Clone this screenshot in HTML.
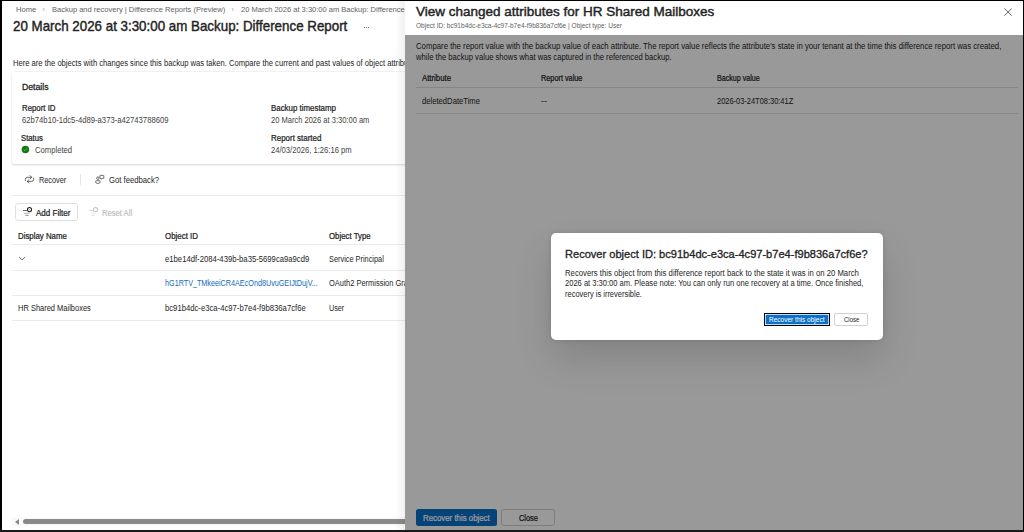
<!DOCTYPE html>
<html><head><meta charset="utf-8">
<style>
*{margin:0;padding:0;box-sizing:border-box}
html,body{width:1024px;height:532px;overflow:hidden;background:#fff}
body{font-family:"Liberation Sans",sans-serif;color:#242424;position:relative}
.t{position:absolute;white-space:nowrap;line-height:1}
</style></head><body>
<div class="t" style="left:15.90px;top:6.25px;font-size:7.5px;color:#616161;transform:scaleX(1.0097);transform-origin:0 0;">Home</div>
<div class="t" style="left:42.6px;top:5.8px;font-size:7px;color:#9e9e9e">&#x203A;</div>
<div class="t" style="left:51.80px;top:6.25px;font-size:7.5px;color:#616161;transform:scaleX(1.0028);transform-origin:0 0;">Backup and recovery | Difference Reports (Preview)</div>
<div class="t" style="left:231.5px;top:5.8px;font-size:7px;color:#9e9e9e">&#x203A;</div>
<div class="t" style="left:241.00px;top:6.25px;font-size:7.5px;color:#616161;transform:scaleX(1.0028);transform-origin:0 0;">20 March 2026 at 3:30:00 am Backup: Difference Report</div>
<div class="t" style="left:12.70px;top:19.48px;font-size:14.2px;color:#242424;-webkit-text-stroke:0.42px #242424;transform:scaleX(0.9406);transform-origin:0 0;">20 March 2026 at 3:30:00 am Backup: Difference Report</div>
<div style="position:absolute;left:363.5px;top:27.3px;width:1px;height:1px;background:#757575"></div>
<div style="position:absolute;left:365.9px;top:27.3px;width:1px;height:1px;background:#757575"></div>
<div style="position:absolute;left:368.3px;top:27.3px;width:1px;height:1px;background:#757575"></div>
<div class="t" style="left:12.70px;top:59.00px;font-size:8.5px;color:#242424;transform:scaleX(0.8948);transform-origin:0 0;">Here are the objects with changes since this backup was taken. Compare the current and past values of object attributes.</div>
<div style="position:absolute;left:12.3px;top:71.3px;width:420px;height:92.5px;background:#fff;border-radius:2px;box-shadow:0 1.6px 2.4px -0.6px rgba(0,0,0,.16)"></div>
<div style="position:absolute;left:14px;top:71px;width:400px;height:1px;background:#f1f1f1"></div>
<div class="t" style="left:21.50px;top:83.21px;font-size:9.2px;color:#242424;-webkit-text-stroke:0.30px #242424;transform:scaleX(0.9459);transform-origin:0 0;">Details</div>
<div class="t" style="left:21.50px;top:104.40px;font-size:8.5px;color:#242424;-webkit-text-stroke:0.24px #242424;transform:scaleX(0.9210);transform-origin:0 0;">Report ID</div>
<div class="t" style="left:21.50px;top:116.10px;font-size:8.5px;color:#424242;transform:scaleX(0.9036);transform-origin:0 0;">62b74b10-1dc5-4d89-a373-a42743788609</div>
<div class="t" style="left:271.40px;top:104.40px;font-size:8.5px;color:#242424;-webkit-text-stroke:0.24px #242424;transform:scaleX(0.9296);transform-origin:0 0;">Backup timestamp</div>
<div class="t" style="left:271.40px;top:116.10px;font-size:8.5px;color:#424242;transform:scaleX(0.8861);transform-origin:0 0;">20 March 2026 at 3:30:00 am</div>
<div class="t" style="left:21.10px;top:133.60px;font-size:8.5px;color:#242424;-webkit-text-stroke:0.24px #242424;transform:scaleX(0.9088);transform-origin:0 0;">Status</div>
<svg style="position:absolute;left:20px;top:144px" width="11" height="11" viewBox="0 0 11 11" shape-rendering="geometricPrecision"><circle cx="5.4" cy="5.4" r="3.75" fill="#107c10"/><path d="M3.7 5.6 L4.9 6.7 L7.1 4.3" stroke="#fff" stroke-opacity=".45" stroke-width="0.8" fill="none"/></svg>
<div class="t" style="left:34.80px;top:146.40px;font-size:8.5px;color:#424242;transform:scaleX(0.9025);transform-origin:0 0;">Completed</div>
<div class="t" style="left:271.40px;top:133.60px;font-size:8.5px;color:#242424;-webkit-text-stroke:0.24px #242424;transform:scaleX(0.9357);transform-origin:0 0;">Report started</div>
<div class="t" style="left:271.40px;top:146.00px;font-size:8.5px;color:#424242;transform:scaleX(0.8976);transform-origin:0 0;">24/03/2026, 1:26:16 pm</div>
<svg style="position:absolute;left:22px;top:172px" width="16" height="14" viewBox="0 0 16 14" fill="none" stroke="#4a4a4a" stroke-width="0.85" stroke-linecap="round" stroke-linejoin="round"><path d="M3.4 8.6 V7.3 Q3.4 5.3 5.4 5.3 H9.6 M8.1 3.6 L9.8 5.3 L8.1 7.0"/><path d="M11.6 6.2 V7.4 Q11.6 9.4 9.6 9.4 H5.4 M6.9 7.7 L5.2 9.4 L6.9 11.1"/></svg>
<div class="t" style="left:38.70px;top:176.00px;font-size:8.5px;color:#242424;transform:scaleX(0.8625);transform-origin:0 0;">Recover</div>
<div style="position:absolute;left:80px;top:174px;width:1px;height:11px;background:#e6e6e6"></div>
<svg style="position:absolute;left:92px;top:172px" width="16" height="14" viewBox="0 0 16 14" fill="none" stroke="#4a4a4a" stroke-width="0.8" stroke-linejoin="round"><path d="M8.3 3.4 H11.4 Q11.8 3.4 11.8 3.8 V6 Q11.8 6.4 11.4 6.4 H10 L9.4 7.3 L9.2 6.4 H8.3 Q7.9 6.4 7.9 6 V3.8 Q7.9 3.4 8.3 3.4 Z"/><circle cx="5.9" cy="6.2" r="1.3"/><path d="M3.6 9.6 Q3.6 8.7 4.5 8.7 H7.3 Q8.2 8.7 8.2 9.6 V10 Q8.2 11.4 5.9 11.4 Q3.6 11.4 3.6 10 Z"/></svg>
<div class="t" style="left:108.60px;top:176.00px;font-size:8.5px;color:#242424;transform:scaleX(0.9044);transform-origin:0 0;">Got feedback?</div>
<div style="position:absolute;left:12.2px;top:195px;width:400px;height:1px;background:#ebebeb"></div>
<div style="position:absolute;left:15.3px;top:203.3px;width:62.8px;height:17.9px;border:1px solid #e0e0e0;border-radius:3px;background:#fff"></div>
<svg style="position:absolute;left:20px;top:204px" width="16" height="16" viewBox="0 0 16 16" fill="none"><path d="M3 6.5 H6.8" stroke="#555" stroke-width="0.9"/><path d="M4.2 9.3 H9.6" stroke="#999" stroke-width="0.8"/><path d="M5.3 11.4 H8.7" stroke="#777" stroke-width="0.8"/><circle cx="9.5" cy="5.6" r="2.05" stroke="#1c1c1c" stroke-width="1.05"/><path d="M9.5 4.9 V6.3 M8.8 5.6 H10.2" stroke="#aaa" stroke-width="0.5"/></svg>
<div class="t" style="left:36.20px;top:208.70px;font-size:8.5px;color:#242424;-webkit-text-stroke:0.24px #242424;transform:scaleX(0.9457);transform-origin:0 0;">Add Filter</div>
<svg style="position:absolute;left:86px;top:204px" width="16" height="16" viewBox="0 0 16 16" fill="none"><path d="M3 6.5 H6.8" stroke="#cfcfcf" stroke-width="0.9"/><path d="M4.2 9.3 H9.6" stroke="#e6e6e6" stroke-width="0.8"/><path d="M5.3 11.4 H8.7" stroke="#dadada" stroke-width="0.8"/><circle cx="9.5" cy="5.6" r="2.05" stroke="#c4c4c4" stroke-width="1.05"/></svg>
<div class="t" style="left:101.90px;top:208.70px;font-size:8.5px;color:#bdbdbd;transform:scaleX(0.8973);transform-origin:0 0;-webkit-text-stroke:0.15px #bdbdbd;">Reset All</div>
<div class="t" style="left:18.00px;top:232.10px;font-size:8.5px;color:#242424;-webkit-text-stroke:0.24px #242424;transform:scaleX(0.9224);transform-origin:0 0;">Display Name</div>
<div class="t" style="left:165.20px;top:232.10px;font-size:8.5px;color:#242424;-webkit-text-stroke:0.24px #242424;transform:scaleX(0.9315);transform-origin:0 0;">Object ID</div>
<div class="t" style="left:329.30px;top:232.10px;font-size:8.5px;color:#242424;-webkit-text-stroke:0.24px #242424;transform:scaleX(0.9203);transform-origin:0 0;">Object Type</div>
<div style="position:absolute;left:12.2px;top:244px;width:400px;height:1px;background:#ebebeb"></div>
<div style="position:absolute;left:12.2px;top:270px;width:400px;height:1px;background:#ebebeb"></div>
<div style="position:absolute;left:12.2px;top:295px;width:400px;height:1px;background:#ebebeb"></div>
<div style="position:absolute;left:12.2px;top:320px;width:400px;height:1px;background:#ebebeb"></div>
<svg style="position:absolute;left:18px;top:255px" width="8" height="7" viewBox="0 0 8 7" fill="none" stroke="#555" stroke-width="0.85"><path d="M1 2.1 L4 4.9 L7.1 2.1"/></svg>
<div class="t" style="left:165.20px;top:255.30px;font-size:8.5px;color:#242424;transform:scaleX(0.9059);transform-origin:0 0;">e1be14df-2084-439b-ba35-5699ca9a9cd9</div>
<div class="t" style="left:329.30px;top:255.30px;font-size:8.5px;color:#242424;transform:scaleX(0.8657);transform-origin:0 0;">Service Principal</div>
<div class="t" style="left:165.20px;top:279.40px;font-size:8.5px;color:#0f6cbd;transform:scaleX(0.8489);transform-origin:0 0;">hG1RTV_TMkeeiCR4AEcOnd8UvuGEIJtDujV...</div>
<div class="t" style="left:329.30px;top:279.40px;font-size:8.5px;color:#242424;transform:scaleX(0.8798);transform-origin:0 0;">OAuth2 Permission Grant</div>
<div class="t" style="left:18.00px;top:304.30px;font-size:8.5px;color:#242424;transform:scaleX(0.8805);transform-origin:0 0;">HR Shared Mailboxes</div>
<div class="t" style="left:165.20px;top:304.30px;font-size:8.5px;color:#242424;transform:scaleX(0.9049);transform-origin:0 0;">bc91b4dc-e3ca-4c97-b7e4-f9b836a7cf6e</div>
<div class="t" style="left:329.30px;top:304.30px;font-size:8.5px;color:#242424;transform:scaleX(0.8469);transform-origin:0 0;">User</div>
<div style="position:absolute;left:12px;top:517px;width:400px;height:9px;background:#fafafa"></div>
<div style="position:absolute;left:14.8px;top:519px;width:0;height:0;border-top:3px solid transparent;border-bottom:3px solid transparent;border-right:4.3px solid #8a8a8a"></div>
<div style="position:absolute;left:23.4px;top:519px;width:400px;height:5.4px;border-radius:2.7px;background:#8a8a8a"></div>
<div style="position:absolute;left:395px;top:0;width:10px;height:532px;background:linear-gradient(to right,rgba(0,0,0,0),rgba(0,0,0,.06))"></div>
<div style="position:absolute;left:405px;top:0;width:620px;height:532px;background:#fff"></div>
<div class="t" style="left:416.30px;top:5.93px;font-size:12.6px;color:#242424;-webkit-text-stroke:0.42px #242424;transform:scaleX(1.0717);transform-origin:0 0;">View changed attributes for HR Shared Mailboxes</div>
<div class="t" style="left:416.30px;top:22.71px;font-size:6.6px;color:#616161;transform:scaleX(0.9901);transform-origin:0 0;">Object ID: bc91b4dc-e3ca-4c97-b7e4-f9b836a7cf6e | Object type: User</div>
<svg style="position:absolute;left:1003.5px;top:8.4px" width="8.2" height="8.2" viewBox="0 0 8 8" fill="none" stroke="#424242" stroke-width="0.8"><path d="M0.5 0.5 L7.5 7.5 M7.5 0.5 L0.5 7.5"/></svg>
<div class="t" style="left:416.30px;top:42.30px;font-size:8.5px;color:#242424;transform:scaleX(0.9144);transform-origin:0 0;">Compare the report value with the backup value of each attribute. The report value reflects the attribute's state in your tenant at the time this difference report was created,</div>
<div class="t" style="left:416.30px;top:53.10px;font-size:8.5px;color:#242424;transform:scaleX(0.9001);transform-origin:0 0;">while the backup value shows what was captured in the referenced backup.</div>
<div class="t" style="left:422.00px;top:74.40px;font-size:8.5px;color:#242424;-webkit-text-stroke:0.24px #242424;transform:scaleX(0.9161);transform-origin:0 0;">Attribute</div>
<div class="t" style="left:541.20px;top:74.40px;font-size:8.5px;color:#242424;-webkit-text-stroke:0.24px #242424;transform:scaleX(0.8590);transform-origin:0 0;">Report value</div>
<div class="t" style="left:716.50px;top:74.40px;font-size:8.5px;color:#242424;-webkit-text-stroke:0.24px #242424;transform:scaleX(0.8367);transform-origin:0 0;">Backup value</div>
<div style="position:absolute;left:416px;top:87px;width:601.5px;height:1px;background:#e0e0e0"></div>
<div class="t" style="left:422.00px;top:97.40px;font-size:8.5px;color:#242424;transform:scaleX(0.9004);transform-origin:0 0;">deletedDateTime</div>
<div class="t" style="left:541.20px;top:97.40px;font-size:8.5px;color:#242424;transform:scaleX(1.0421);transform-origin:0 0;">--</div>
<div class="t" style="left:716.50px;top:97.40px;font-size:8.5px;color:#242424;transform:scaleX(0.8763);transform-origin:0 0;">2026-03-24T08:30:41Z</div>
<div style="position:absolute;left:416px;top:113px;width:601.5px;height:1px;background:#e0e0e0"></div>
<div style="position:absolute;left:416.1px;top:508.8px;width:81px;height:17.4px;background:#0a70c8;border-radius:2.5px"></div>
<div class="t" style="left:423.30px;top:514.10px;font-size:8.5px;color:#fff;-webkit-text-stroke:0.24px #fff;transform:scaleX(0.9227);transform-origin:0 0;">Recover this object</div>
<div style="position:absolute;left:501.3px;top:508.8px;width:53.4px;height:17.4px;background:#fff;border:1px solid #d1d1d1;border-radius:2.5px"></div>
<div class="t" style="left:518.90px;top:514.10px;font-size:8.5px;color:#242424;-webkit-text-stroke:0.24px #242424;transform:scaleX(0.8697);transform-origin:0 0;">Close</div>
<div style="position:absolute;left:405px;top:35.2px;width:620px;height:497px;background:rgba(0,0,0,.4)"></div>
<div style="position:absolute;left:551px;top:232.8px;width:332px;height:107px;background:#fff;border-radius:5px;box-shadow:0 0 5px rgba(0,0,0,.12),0 19px 38px rgba(0,0,0,.14)"></div>
<div class="t" style="left:565.20px;top:249.25px;font-size:11.4px;color:#242424;-webkit-text-stroke:0.32px #242424;transform:scaleX(0.9714);transform-origin:0 0;">Recover object ID: bc91b4dc-e3ca-4c97-b7e4-f9b836a7cf6e?</div>
<div class="t" style="left:565.20px;top:268.57px;font-size:8.3px;color:#242424;transform:scaleX(0.9321);transform-origin:0 0;">Recovers this object from this difference report back to the state it was in on 20 March</div>
<div class="t" style="left:565.20px;top:279.37px;font-size:8.3px;color:#242424;transform:scaleX(0.9099);transform-origin:0 0;">2026 at 3:30:00 am. Please note: You can only run one recovery at a time. Once finished,</div>
<div class="t" style="left:565.20px;top:289.97px;font-size:8.3px;color:#242424;transform:scaleX(0.9012);transform-origin:0 0;">recovery is irreversible.</div>
<div style="position:absolute;left:763.8px;top:313px;width:65.8px;height:12.9px;background:#0a70c8;border:1.3px solid #000;box-shadow:inset 0 0 0 0.7px #fff"></div>
<div class="t" style="left:768.80px;top:315.82px;font-size:7.3px;color:#fff;transform:scaleX(0.8940);transform-origin:0 0;">Recover this object</div>
<div style="position:absolute;left:834.1px;top:313.3px;width:34.4px;height:12.3px;background:#fff;border:1px solid #d1d1d1;border-radius:2px"></div>
<div class="t" style="left:843.70px;top:315.82px;font-size:7.3px;color:#242424;transform:scaleX(0.8251);transform-origin:0 0;">Close</div>
<div style="position:absolute;left:0;top:0;width:1024px;height:1px;background:#000"></div>
<div style="position:absolute;left:0;top:0;width:1.6px;height:532px;background:#000"></div>
<div style="position:absolute;left:1023px;top:0;width:1px;height:532px;background:#000"></div>
<div style="position:absolute;left:0;top:530.3px;width:1024px;height:1.7px;background:#1a1a1a"></div>
</body></html>
